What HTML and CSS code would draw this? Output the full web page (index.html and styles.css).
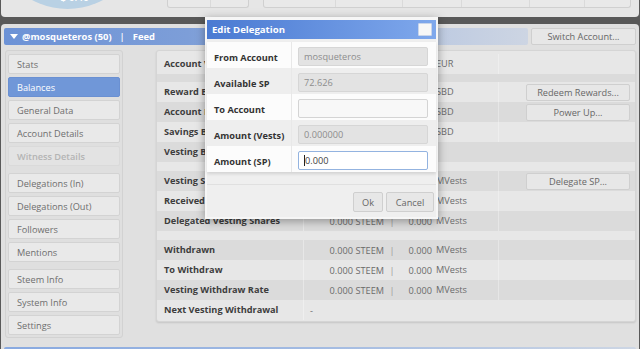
FILE: index.html
```html
<!DOCTYPE html>
<html lang="en">
<head>
    <meta charset="UTF-8">
    <title>Steem Wallet - Balances</title>
    <link rel="stylesheet" href="styles.css">
</head>
<body>
    <!-- bandeau du haut (coupé) -->
    <div class="top-panel">
        <div class="pie"><span class="pie-label">$ 0.46</span></div>
        <div class="mini-box box-one">
            <div class="cell w43"></div>
            <div class="cell last"></div>
        </div>
        <div class="mini-box box-two">
            <div class="cell w72"></div>
            <div class="cell w67"></div>
            <div class="cell w59"></div>
            <div class="cell w68"></div>
            <div class="cell w55"></div>
            <div class="cell last"></div>
        </div>
    </div>

    <div class="main-panel">
        <div class="section-head">
            <div class="section-bar">
                <svg class="caret" width="8" height="6" viewBox="0 0 8 6"><polygon points="0,0 8,0 4,5" fill="#fff"/></svg>
                <span>@mosqueteros (50)</span>
                <span class="bar-sep">|</span>
                <span>Feed</span>
            </div>
            <div class="btn switch-btn">Switch Account...</div>
        </div>

        <div class="section-body">
            <div class="sidebar">
                <div class="nav-group">
                    <div class="nav-btn">Stats</div>
                    <div class="nav-btn selected">Balances</div>
                    <div class="nav-btn">General Data</div>
                    <div class="nav-btn">Account Details</div>
                    <div class="nav-btn disabled">Witness Details</div>
                </div>
                <div class="nav-group">
                    <div class="nav-btn">Delegations (In)</div>
                    <div class="nav-btn">Delegations (Out)</div>
                    <div class="nav-btn">Followers</div>
                    <div class="nav-btn">Mentions</div>
                </div>
                <div class="nav-group">
                    <div class="nav-btn">Steem Info</div>
                    <div class="nav-btn">System Info</div>
                    <div class="nav-btn">Settings</div>
                </div>
            </div>

            <div class="balance-panel">
                <div class="row">
                    <div class="lbl">Account Value</div><div class="v1">$ 0.46</div><div class="sep">|</div><div class="v2">0.40</div><div class="unit">EUR</div><div class="act"></div>
                </div>
                <div class="spacer dark"></div>
                <div class="row">
                    <div class="lbl">Reward Balance</div><div class="v1">0.000 STEEM</div><div class="sep">|</div><div class="v2">0.000</div><div class="unit">SBD</div><div class="act"><div class="btn act-btn">Redeem Rewards...</div></div>
                </div>
                <div class="row dark">
                    <div class="lbl">Account Balance</div><div class="v1">0.000 STEEM</div><div class="sep">|</div><div class="v2">0.000</div><div class="unit">SBD</div><div class="act"><div class="btn act-btn">Power Up...</div></div>
                </div>
                <div class="row">
                    <div class="lbl">Savings Balance</div><div class="v1">0.000 STEEM</div><div class="sep">|</div><div class="v2">0.000</div><div class="unit">SBD</div><div class="act"></div>
                </div>
                <div class="row dark">
                    <div class="lbl">Vesting Balance</div><div class="v1">72.626 SP</div><div class="sep"></div><div class="v2"></div><div class="unit"></div><div class="act"></div>
                </div>
                <div class="spacer tall"></div>
                <div class="row dark">
                    <div class="lbl">Vesting Shares</div><div class="v1">72.626 SP</div><div class="sep">|</div><div class="v2">0.147</div><div class="unit">MVests</div><div class="act"><div class="btn act-btn">Delegate SP...</div></div>
                </div>
                <div class="row">
                    <div class="lbl">Received Vesting Shares</div><div class="v1">0.000 STEEM</div><div class="sep">|</div><div class="v2">0.000</div><div class="unit">MVests</div><div class="act"></div>
                </div>
                <div class="row dark">
                    <div class="lbl">Delegated Vesting Shares</div><div class="v1">0.000 STEEM</div><div class="sep">|</div><div class="v2">0.000</div><div class="unit">MVests</div><div class="act"></div>
                </div>
                <div class="spacer tall"></div>
                <div class="row dark">
                    <div class="lbl">Withdrawn</div><div class="v1">0.000 STEEM</div><div class="sep">|</div><div class="v2">0.000</div><div class="unit">MVests</div><div class="act"></div>
                </div>
                <div class="row">
                    <div class="lbl">To Withdraw</div><div class="v1">0.000 STEEM</div><div class="sep">|</div><div class="v2">0.000</div><div class="unit">MVests</div><div class="act"></div>
                </div>
                <div class="row dark">
                    <div class="lbl">Vesting Withdraw Rate</div><div class="v1">0.000 STEEM</div><div class="sep">|</div><div class="v2">0.000</div><div class="unit">MVests</div><div class="act"></div>
                </div>
                <div class="row">
                    <div class="lbl">Next Vesting Withdrawal</div><div class="v1 left">-</div><div class="sep"></div><div class="v2"></div><div class="unit"></div><div class="act"></div>
                </div>
            </div>
        </div>

        <div class="next-bar"></div>
    </div>

    <!-- fenêtre modale -->
    <div class="dialog">
        <div class="dialog-title">
            <span>Edit Delegation</span>
            <div class="close-box"></div>
        </div>
        <div class="dialog-form">
            <div class="form-row">
                <div class="form-lbl">From Account</div>
                <div class="form-field"><div class="input disabled">mosqueteros</div></div>
            </div>
            <div class="form-row alt">
                <div class="form-lbl">Available SP</div>
                <div class="form-field"><div class="input disabled">72.626</div></div>
            </div>
            <div class="form-row">
                <div class="form-lbl">To Account</div>
                <div class="form-field"><div class="input"></div></div>
            </div>
            <div class="form-row alt">
                <div class="form-lbl">Amount (Vests)</div>
                <div class="form-field"><div class="input disabled">0.000000</div></div>
            </div>
            <div class="form-row">
                <div class="form-lbl">Amount (SP)</div>
                <div class="form-field"><div class="input focused"><span class="text-caret"></span>0.000</div></div>
            </div>
        </div>
        <div class="dialog-footer">
            <div class="btn ok-btn">Ok</div>
            <div class="btn cancel-btn">Cancel</div>
        </div>
    </div>
</body>
</html>
```

FILE: styles.css
```css
* {
    margin: 0;
    padding: 0;
    box-sizing: border-box;
}

body {
    width: 640px;
    height: 349px;
    overflow: hidden;
    background: #595959;
    font-family: "Open Sans", "DejaVu Sans", sans-serif;
    font-size: 9.2px;
    color: #6b6b6b;
}

/* bandeau du haut */
.top-panel {
    height: 17px;
    margin: 0 1px 7px 1px;
    padding-bottom: 9px;
    background: #e6e6e6;
    border-radius: 0 0 4px 4px;
    display: flex;
    align-items: flex-end;
    overflow: hidden;
}

.pie {
    width: 149px;
    height: 149px;
    flex-shrink: 0;
    margin-left: -8px;
    margin-bottom: -1px;
    border-radius: 50%;
    background: #b9d1e4;
    display: flex;
    align-items: flex-end;
    justify-content: center;
}

.pie-label {
    color: #fff;
    font-size: 10px;
    font-weight: 600;
    line-height: 10px;
    margin-bottom: 7px;
    margin-left: 14px;
}

.mini-box {
    height: 24px;
    flex-shrink: 0;
    display: flex;
    background: #e9e9e9;
    border: 1px solid #d0d0d0;
    border-top: none;
    border-radius: 0 0 3px 3px;
}

.box-one {
    width: 82px;
    margin-left: 25px;
}

.box-two {
    width: 368px;
    margin-left: 14px;
}

.cell {
    border-right: 1px solid #dadada;
}

.cell.last {
    flex: 1;
    border-right: none;
}

.w43 { width: 43px; }
.w72 { width: 72px; }
.w67 { width: 67px; }
.w59 { width: 59px; }
.w68 { width: 68px; }
.w55 { width: 55px; }

/* panneau principal */
.main-panel {
    height: 330px;
    margin: 0 1px;
    padding: 4px 3px 0 3px;
    background: #e0e0e0;
    border-radius: 4px 4px 0 0;
}

.section-head {
    display: flex;
    gap: 3px;
    height: 17px;
}

.section-bar {
    flex: 1;
    display: flex;
    align-items: center;
    padding-left: 6px;
    color: #fff;
    font-weight: 700;
    font-size: 9.4px;
    background: linear-gradient(to right, #6c92d6 0%, #7d9ed8 35%, #b4c4e0 70%, #cdd5e3 100%);
    border-radius: 2px;
}

.caret {
    margin-right: 4px;
}

.bar-sep {
    margin: 0 8px;
    font-weight: 600;
}

.btn {
    background: #e7e7e7;
    border: 1px solid #cfcfcf;
    border-radius: 2px;
    color: #666;
    display: flex;
    align-items: center;
    justify-content: center;
}

.switch-btn {
    width: 105px;
}

.section-body {
    display: flex;
    align-items: flex-start;
    margin-top: 5px;
}

/* barre latérale */
.sidebar {
    width: 118px;
    margin-left: 1px;
    padding: 3px 2px 2px 2px;
    background: #dfdfdf;
    border: 1px solid #d2d2d2;
    border-radius: 3px;
}

.nav-group + .nav-group {
    margin-top: 7px;
}

.nav-btn {
    height: 20px;
    padding-left: 8px;
    display: flex;
    align-items: center;
    background: #e9e9e9;
    border: 1px solid #d3d3d3;
    border-radius: 2px;
    color: #6e6e6e;
}

.nav-btn + .nav-btn {
    margin-top: 3px;
}

.nav-btn.selected {
    background: #7097d8;
    border-color: #6a90d2;
    color: #fff;
}

.nav-btn.disabled {
    color: #b4b4b4;
    font-weight: 600;
    background: #e3e3e3;
    border-color: #dadada;
}

/* tableau des soldes */
.balance-panel {
    width: 480px;
    height: 272px;
    margin-left: 33px;
    padding-top: 3px;
    background: #e7e7e7;
    border: 1px solid #d5d5d5;
    border-radius: 3px;
    box-shadow: 0 1px 2px rgba(0, 0, 0, 0.12);
}

.row {
    height: 20px;
    display: grid;
    grid-template-columns: 147px 83px 10px 36px 66px 1fr;
    align-items: center;
}

.row.dark,
.spacer.dark {
    background: #dbdbdb;
}

.spacer {
    height: 8px;
}

.spacer.tall {
    height: 9px;
}

.lbl {
    padding-left: 7px;
    font-weight: 700;
    color: #3d3d3d;
    white-space: nowrap;
    overflow: hidden;
    line-height: 20px;
    border-right: 1px solid rgba(255, 255, 255, 0.35);
}

.v1 {
    text-align: right;
    padding-right: 3px;
    white-space: nowrap;
}

.v1.left {
    text-align: left;
    padding-left: 6px;
}

.sep {
    text-align: center;
    color: #9a9a9a;
}

.v2 {
    text-align: right;
    padding-right: 1px;
}

.unit {
    padding-left: 3px;
    line-height: 20px;
    border-right: 1px solid rgba(255, 255, 255, 0.3);
}

.act {
    padding-left: 27px;
}

.act-btn {
    width: 104px;
    height: 17px;
}

.next-bar {
    height: 4px;
    margin-top: 9px;
    background: linear-gradient(to right, #88a9e0 0%, #a3bbe2 50%, #cdd6e4 100%);
    border-radius: 2px 2px 0 0;
}

/* fenêtre Edit Delegation */
.dialog {
    position: absolute;
    left: 205px;
    top: 17px;
    width: 233px;
    height: 202px;
    background: #efefef;
    border: 2px solid #f6f6f6;
    border-top-width: 3px;
    box-shadow: 0 2px 9px rgba(0, 0, 0, 0.35);
}

.dialog-title {
    height: 19px;
    padding: 0 4px 0 5px;
    display: flex;
    align-items: center;
    justify-content: space-between;
    background: linear-gradient(to right, #4a7ad2, #7fa8ec);
    color: #fff;
    font-weight: 700;
    font-size: 9.6px;
}

.close-box {
    width: 14px;
    height: 13px;
    background: #f7f7f7;
    border: 1px solid #c9d5ea;
    border-radius: 1px;
}

.dialog-form {
    margin-top: 3px;
    background: #fcfcfc;
    box-shadow: 0 2px 3px rgba(0, 0, 0, 0.12);
}

.form-row {
    height: 26px;
    display: flex;
}

.form-row.alt {
    background: #eeeeee;
}

.form-lbl {
    width: 85px;
    padding-left: 7px;
    padding-top: 5px;
    display: flex;
    align-items: center;
    font-weight: 700;
    color: #333;
    border-right: 1px solid #e8e8e8;
}

.form-field {
    flex: 1;
    padding: 5px 8px 2px 6px;
}

.input {
    height: 19px;
    padding-left: 5px;
    display: flex;
    align-items: center;
    background: #f8f8f8;
    border: 1px solid #d4d4d4;
    border-radius: 2px;
    color: #444;
}

.input.disabled {
    background: #e3e3e3;
    border-color: #d6d6d6;
    color: #8d8d8d;
}

.input.focused {
    background: #fff;
    border-color: #93b3e0;
}

.text-caret {
    display: inline-block;
    width: 0;
    height: 11px;
    border-left: 1px solid #222;
}

.dialog-footer {
    margin-top: 12px;
    padding: 7px 2px 0 0;
    border-top: 1px solid #e0e0e0;
    display: flex;
    justify-content: flex-end;
    gap: 3px;
}

.ok-btn {
    width: 30px;
    height: 20px;
}

.cancel-btn {
    width: 48px;
    height: 20px;
}
```
